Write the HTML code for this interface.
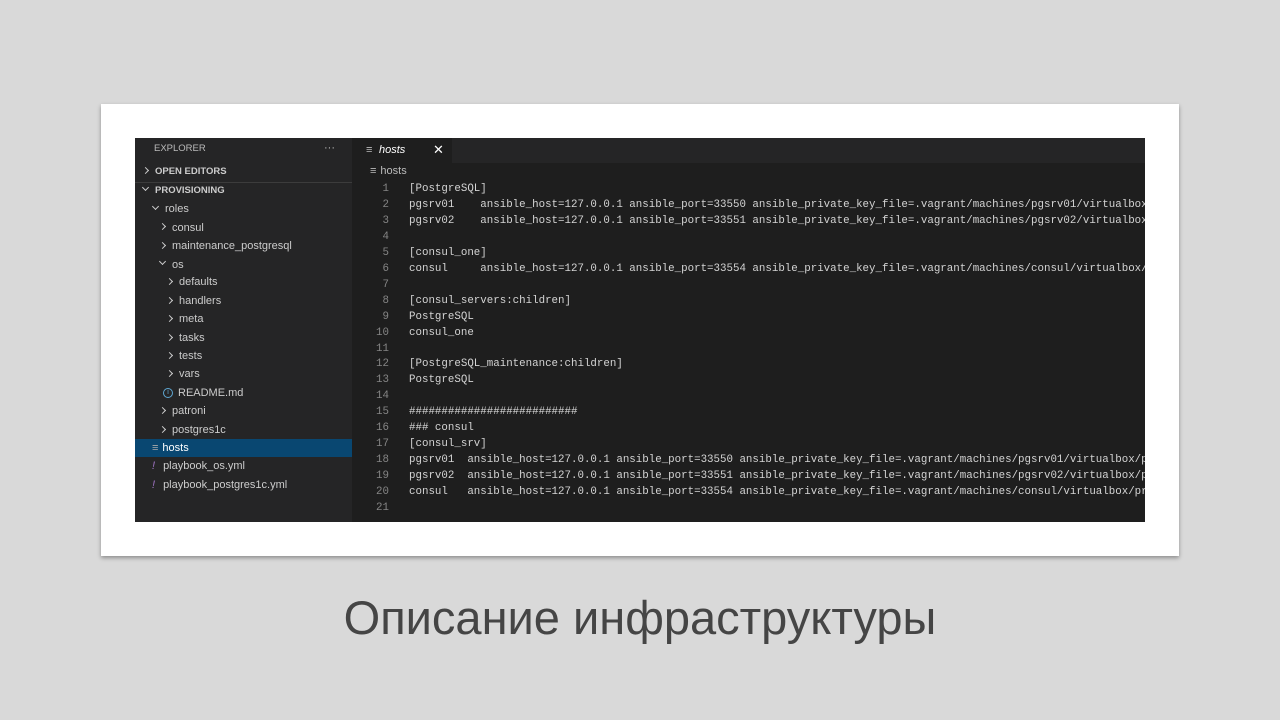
<!DOCTYPE html>
<html><head><meta charset="utf-8"><style>
*{margin:0;padding:0;box-sizing:border-box}
body{width:1280px;height:720px;background:#d9d9d9;position:relative;overflow:hidden;font-family:"Liberation Sans",sans-serif}
.card{position:absolute;left:101px;top:104px;width:1078px;height:452px;background:#fff;box-shadow:0 2px 4px rgba(0,0,0,.35)}
.vs{position:absolute;left:135px;top:138px;width:1010px;height:384px;background:#1e1e1e;overflow:hidden}
.side{position:absolute;left:0;top:0;width:217px;height:384px;background:#252526;color:#ccc;font-size:11px}
.side .r{position:absolute;height:18px;line-height:18px;white-space:nowrap}
.chev{display:inline-block;width:5px;height:5px;border-right:1.2px solid #ccc;border-bottom:1.2px solid #ccc;margin-right:7px;vertical-align:middle}
.cr{transform:rotate(-45deg);position:relative;top:-1px}
.cd{transform:rotate(45deg);position:relative;top:-3px}
.tabbar{position:absolute;left:217px;top:0;right:0;height:25px;background:#252526}
.tab{position:absolute;left:0;top:0;width:100px;height:25px;background:#1e1e1e;color:#fff;font-size:11px;font-style:italic;line-height:24px;padding-left:27px}
.code{position:absolute;left:217px;top:44px;font-family:"Liberation Mono",monospace;font-size:10.8px;line-height:15.95px;color:#d4d4d4;white-space:pre}
.ln{position:absolute;left:0;width:37px;text-align:right;color:#858585}
.tx{position:absolute;left:57px}
.title{position:absolute;top:590px;left:0;width:1280px;text-align:center;font-size:47px;color:#454545}
</style></head><body>
<div class="card"></div>
<div class="vs">
 <div class="side">
  <div class="r" style="left:19px;top:2px;font-size:9.5px;color:#bbb">EXPLORER</div>
  <div class="r" style="left:189px;top:1px;color:#bbb">···</div>
  <div class="r" style="left:8px;top:25px;font-weight:bold;font-size:9.5px"><span class="chev cr"></span>OPEN EDITORS</div>
  <div style="position:absolute;left:0;top:44px;width:217px;height:1px;background:#3c3c3c"></div>
  <div class="r" style="left:8px;top:44px;font-weight:bold;font-size:9.5px"><span class="chev cd"></span>PROVISIONING</div>
  <div class="r" style="left:18px;top:62px"><span class="chev cd"></span>roles</div>
  <div class="r" style="left:25px;top:80.5px"><span class="chev cr"></span>consul</div>
  <div class="r" style="left:25px;top:99px"><span class="chev cr"></span>maintenance_postgresql</div>
  <div class="r" style="left:25px;top:117.5px"><span class="chev cd"></span>os</div>
  <div class="r" style="left:32px;top:135px"><span class="chev cr"></span>defaults</div>
  <div class="r" style="left:32px;top:154px"><span class="chev cr"></span>handlers</div>
  <div class="r" style="left:32px;top:172px"><span class="chev cr"></span>meta</div>
  <div class="r" style="left:32px;top:191px"><span class="chev cr"></span>tasks</div>
  <div class="r" style="left:32px;top:209px"><span class="chev cr"></span>tests</div>
  <div class="r" style="left:32px;top:227px"><span class="chev cr"></span>vars</div>
  <div class="r" style="left:28px;top:246px"><span style="display:inline-block;width:10px;height:10px;border-radius:50%;border:1.2px solid #5fa8d3;color:#5fa8d3;font-size:7px;line-height:8px;text-align:center;margin-right:5px;vertical-align:middle">i</span>README.md</div>
  <div class="r" style="left:25px;top:264px"><span class="chev cr"></span>patroni</div>
  <div class="r" style="left:25px;top:283px"><span class="chev cr"></span>postgres1c</div>
  <div style="position:absolute;left:0;top:301px;width:217px;height:18px;background:#094771"></div>
  <div class="r" style="left:17px;top:301px;color:#fff"><span style="color:#aaa;margin-right:4px">≡</span>hosts</div>
  <div class="r" style="left:17px;top:319px"><span style="color:#a074c4;font-style:italic;margin-right:8px">!</span>playbook_os.yml</div>
  <div class="r" style="left:17px;top:338px"><span style="color:#a074c4;font-style:italic;margin-right:8px">!</span>playbook_postgres1c.yml</div>
 </div>
 <div class="tabbar"><div class="tab"><span style="position:absolute;left:14px;font-style:normal;color:#bbb">≡</span>hosts<span style="position:absolute;left:81px;font-style:normal;font-size:13px">✕</span></div></div>
 <div style="position:absolute;left:235px;top:27px;color:#bbb;font-size:11px"><span style="margin-right:4px">≡</span>hosts</div>
 <div class="code">
<div class="ln" style="top:0">1</div><div class="tx" style="top:0">[PostgreSQL]</div>
<div class="ln" style="top:15.95px">2</div><div class="tx" style="top:15.95px">pgsrv01    ansible_host=127.0.0.1 ansible_port=33550 ansible_private_key_file=.vagrant/machines/pgsrv01/virtualbox/private_key</div>
<div class="ln" style="top:31.9px">3</div><div class="tx" style="top:31.9px">pgsrv02    ansible_host=127.0.0.1 ansible_port=33551 ansible_private_key_file=.vagrant/machines/pgsrv02/virtualbox/private_key</div>
<div class="ln" style="top:47.85px">4</div>
<div class="ln" style="top:63.8px">5</div><div class="tx" style="top:63.8px">[consul_one]</div>
<div class="ln" style="top:79.75px">6</div><div class="tx" style="top:79.75px">consul     ansible_host=127.0.0.1 ansible_port=33554 ansible_private_key_file=.vagrant/machines/consul/virtualbox/private_key</div>
<div class="ln" style="top:95.7px">7</div>
<div class="ln" style="top:111.65px">8</div><div class="tx" style="top:111.65px">[consul_servers:children]</div>
<div class="ln" style="top:127.6px">9</div><div class="tx" style="top:127.6px">PostgreSQL</div>
<div class="ln" style="top:143.55px">10</div><div class="tx" style="top:143.55px">consul_one</div>
<div class="ln" style="top:159.5px">11</div>
<div class="ln" style="top:175.45px">12</div><div class="tx" style="top:175.45px">[PostgreSQL_maintenance:children]</div>
<div class="ln" style="top:191.4px">13</div><div class="tx" style="top:191.4px">PostgreSQL</div>
<div class="ln" style="top:207.35px">14</div>
<div class="ln" style="top:223.3px">15</div><div class="tx" style="top:223.3px">##########################</div>
<div class="ln" style="top:239.25px">16</div><div class="tx" style="top:239.25px">### consul</div>
<div class="ln" style="top:255.2px">17</div><div class="tx" style="top:255.2px">[consul_srv]</div>
<div class="ln" style="top:271.15px">18</div><div class="tx" style="top:271.15px">pgsrv01  ansible_host=127.0.0.1 ansible_port=33550 ansible_private_key_file=.vagrant/machines/pgsrv01/virtualbox/private_key</div>
<div class="ln" style="top:287.1px">19</div><div class="tx" style="top:287.1px">pgsrv02  ansible_host=127.0.0.1 ansible_port=33551 ansible_private_key_file=.vagrant/machines/pgsrv02/virtualbox/private_key</div>
<div class="ln" style="top:303.05px">20</div><div class="tx" style="top:303.05px">consul   ansible_host=127.0.0.1 ansible_port=33554 ansible_private_key_file=.vagrant/machines/consul/virtualbox/private_key</div>
<div class="ln" style="top:319px">21</div>
 </div>
</div>
<div class="title">Описание инфраструктуры</div>
</body></html>
